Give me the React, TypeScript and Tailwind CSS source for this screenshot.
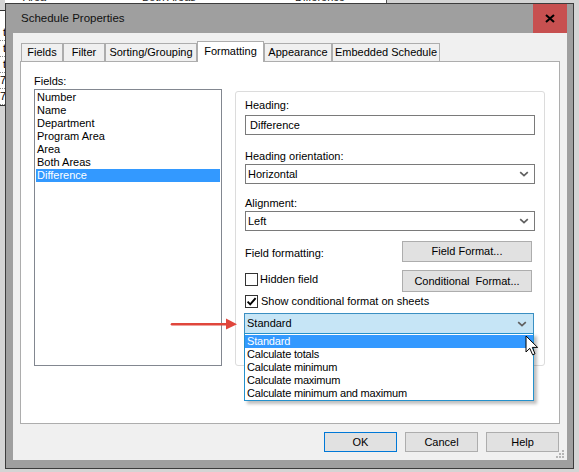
import React from "react";

const Chevron = () => (
  <svg width="10" height="6" viewBox="0 0 10 6" className="block">
    <path d="M1.2 1.2L5 4.6L8.8 1.2" fill="none" stroke="#5f5f5f" strokeWidth="1.7" />
  </svg>
);

const Checkbox = ({ checked }: { checked?: boolean }) => (
  <div className="w-[13px] h-[13px] border border-[#333333] bg-white flex items-center justify-center shrink-0">
    {checked && (
      <svg width="11" height="11" viewBox="0 0 11 11" className="block">
        <path d="M1.6 5.6L4.2 8.3L9.6 2.2" fill="none" stroke="#000" strokeWidth="1.9" />
      </svg>
    )}
  </div>
);

const Tab = ({ label, w, active }: { label: string; w: string; active?: boolean }) =>
  active ? (
    <div className={`${w} h-[21px] border border-b-0 border-[#adadad] bg-white flex items-center justify-center pb-[2px]`}>
      {label}
    </div>
  ) : (
    <div className={`${w} h-[18px] mb-px border border-b-0 border-[#adadad] bg-[#f0f0f0] flex items-center justify-center`}>
      {label}
    </div>
  );

const Button = ({ label, cls }: { label: string; cls: string }) => (
  <div className={`${cls} border bg-[#e1e1e1] flex items-center justify-center`}>{label}</div>
);

export default function App() {
  const fields = ["Number", "Name", "Department", "Program Area", "Area", "Both Areas", "Difference"];
  const options = ["Standard", "Calculate totals", "Calculate minimum", "Calculate maximum", "Calculate minimum and maximum"];
  return (
    <div className="relative w-[579px] h-[472px] bg-[#d4d4d4] overflow-hidden text-[11px] leading-[13px] text-black font-['Liberation_Sans',Arial,sans-serif]">
      {/* background schedule fragments */}
      <div className="absolute left-[5px] top-0 w-[382px] h-[3px] bg-white border-r border-[#555] overflow-hidden">
        <span className="absolute left-[18px] top-[-9px] text-[#222]">Area</span>
        <span className="absolute left-[137px] top-[-9px] text-[#222]">Both Areas</span>
        <span className="absolute left-[290px] top-[-9px] text-[#222]">Difference</span>
      </div>
      <div className="absolute left-0 top-[10px] w-[5px] h-[96px] bg-white border-y border-[#333] overflow-hidden flex flex-col pt-[14px]">
        {["t", "t", "t", "7", "7"].map((c, i) => (
          <div key={i} className="h-[16px] border-b border-dotted border-[#888] flex items-center justify-end">
            <span className="-mr-px">{c}</span>
          </div>
        ))}
      </div>

      {/* dialog window */}
      <div className="absolute left-[5px] top-[3px] w-[569px] h-[466px] border border-[#3c3c3c] bg-[#9f9f9f] flex flex-col">
        <div className="h-[29px] flex items-center justify-between shrink-0">
          <div className="pl-[15px] text-[11.5px] text-[#111]">Schedule Properties</div>
          <div className="w-[34px] h-[29px] mr-[6px] bg-[#c75050] flex items-center justify-center">
            <svg width="10" height="9" viewBox="0 0 10 9" className="block">
              <path d="M1 1L9 8M9 1L1 8" stroke="#000" strokeWidth="2.1" />
            </svg>
          </div>
        </div>
        <div className="relative flex-1 ml-[7px] mr-[6px] mb-[8px] bg-[#f0f0f0] flex flex-col">
          {/* tabs */}
          <div className="relative z-10 flex items-end h-[21px] mt-[8px] ml-[8px] -mb-px">
            <Tab label="Fields" w="w-[42px]" />
            <Tab label="Filter" w="w-[42px]" />
            <Tab label="Sorting/Grouping" w="w-[92px]" />
            <Tab label="Formatting" w="w-[67px]" active />
            <Tab label="Appearance" w="w-[68px]" />
            <Tab label="Embedded Schedule" w="w-[108px]" />
          </div>
          {/* tab panel */}
          <div className="mx-[7px] h-[363px] border border-[#adadad] bg-white flex pl-[13px]">
            <div className="flex flex-col">
              <div className="mt-[13px] h-[13px]">Fields:</div>
              <div className="mt-px w-[188px] h-[277px] border border-[#828790] bg-white p-px">
                {fields.map((f) => (
                  <div
                    key={f}
                    className={`h-[13px] pl-px ${f === "Difference" ? "bg-[#3399ff] text-white" : ""}`}
                  >
                    {f}
                  </div>
                ))}
              </div>
            </div>
            {/* group box */}
            <div className="relative self-start mt-[29px] ml-[13px] w-[310px] h-[275px] border border-[#dcdcdc] rounded-[3px] bg-white pl-[9px] pt-[7px] flex flex-col">
              <div className="h-[13px]">Heading:</div>
              <div className="mt-[3px] w-[290px] h-[20px] border border-[#7a7a7a] bg-white flex items-center pl-[4px]">
                Difference
              </div>
              <div className="mt-[15px] h-[13px]">Heading orientation:</div>
              <div className="mt-px w-[290px] h-[20px] border border-[#7a7a7a] bg-white flex items-center justify-between pl-[2px] pr-[5px]">
                <span>Horizontal</span>
                <Chevron />
              </div>
              <div className="mt-[13px] h-[13px]">Alignment:</div>
              <div className="mt-px w-[290px] h-[20px] border border-[#7a7a7a] bg-white flex items-center justify-between pl-[2px] pr-[5px]">
                <span>Left</span>
                <Chevron />
              </div>
              <div className="mt-[10px] w-[287px] h-[21px] flex items-end justify-between">
                <span className="mb-[2px]">Field formatting:</span>
                <Button label="Field Format..." cls="w-[130px] h-[21px] border-[#adadad]" />
              </div>
              <div className="mt-[8px] w-[287px] h-[22px] flex items-center justify-between">
                <div className="flex items-center gap-[2px] -mt-[3px]">
                  <Checkbox />
                  <span>Hidden field</span>
                </div>
                <Button label="Conditional  Format..." cls="w-[130px] h-[22px] border-[#adadad] whitespace-pre" />
              </div>
              <div className="mt-[3px] h-[13px] flex items-center gap-[3px]">
                <Checkbox checked />
                <span>Show conditional format on sheets</span>
              </div>
              <div className="relative mt-[5px] -ml-px w-[290px]">
                <div className="h-[21px] border border-[#3a8fc2] bg-[#c6e5f6] flex items-center justify-between pl-[2px] pr-[6px]">
                  <span>Standard</span>
                  <Chevron />
                </div>
                <div className="absolute left-0 top-[20px] w-[290px] h-[68px] border border-[#2491cc] bg-white pt-px shadow-[3px_3px_3px_rgba(0,0,0,0.25)] z-20">
                  {options.map((o, i) => (
                    <div
                      key={o}
                      className={`h-[13px] pl-[2px] tracking-[-0.2px] ${i === 0 ? "bg-[#3399ff] text-white" : ""}`}
                    >
                      {o}
                    </div>
                  ))}
                </div>
              </div>
            </div>
          </div>
          {/* bottom buttons */}
          <div className="flex justify-end gap-[8px] mt-[8px] mr-[8px]">
            <Button label="OK" cls="w-[73px] h-[20px] border-[#0078d7]" />
            <Button label="Cancel" cls="w-[73px] h-[20px] border-[#adadad]" />
            <Button label="Help" cls="w-[73px] h-[20px] border-[#adadad]" />
          </div>
          {/* size grip */}
          <svg width="10" height="10" viewBox="0 0 10 10" className="absolute right-[2px] bottom-[1px]">
            <rect x="7" y="1" width="2" height="2" fill="#b5b5b5" />
            <rect x="7" y="4" width="2" height="2" fill="#b5b5b5" />
            <rect x="4" y="4" width="2" height="2" fill="#b5b5b5" />
            <rect x="7" y="7" width="2" height="2" fill="#b5b5b5" />
            <rect x="4" y="7" width="2" height="2" fill="#b5b5b5" />
            <rect x="1" y="7" width="2" height="2" fill="#b5b5b5" />
          </svg>
        </div>
      </div>

      {/* red annotation arrow */}
      <svg width="70" height="16" viewBox="0 0 70 16" className="absolute left-[170px] top-[316px] z-30">
        <path d="M2 8.2H58" stroke="#e0463c" strokeWidth="2.6" strokeLinecap="round" />
        <path d="M56 2.5L67 8.2L56 13.5Z" fill="#e0463c" />
      </svg>

      {/* mouse cursor */}
      <svg width="14" height="22" viewBox="0 0 14 22" className="absolute left-[525px] top-[335px] z-30">
        <path
          d="M1 1V17L4.8 13.3L7.6 19.8L10 18.8L7.3 12.4H12.6Z"
          fill="#fff"
          stroke="#000"
          strokeWidth="1"
          strokeLinejoin="miter"
        />
      </svg>
    </div>
  );
}
